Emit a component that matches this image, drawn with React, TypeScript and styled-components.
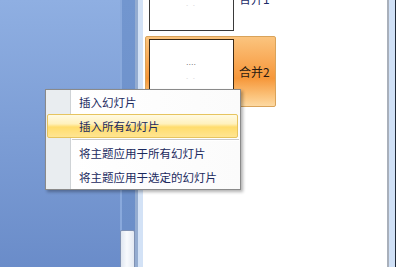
import React from 'react';
import styled, { createGlobalStyle } from 'styled-components';

const GlobalStyle = createGlobalStyle`
    html, body {
        margin: 0;
        padding: 0;
        overflow: hidden;
        background: #ffffff;
    }
    body {
        font-family: "Noto Sans CJK SC", "Noto Sans", sans-serif;
    }
`;

const Screen = styled.div`
    position: relative;
    display: flex;
    width: 399px;
    height: 267px;
    overflow: hidden;
`;

const OutlinePane = styled.div`
    width: 120px;
    background: linear-gradient(#8fafe2, #6a8cc9);
`;

const ScrollTrack = styled.div`
    display: flex;
    flex-direction: column;
    justify-content: flex-end;
    width: 15px;
    box-sizing: border-box;
    border-left: 2px solid #89a9dc;
    background: linear-gradient(#7296cf, #6b8ec8);
`;

const ScrollThumb = styled.div`
    height: 37px;
    margin-left: -2px;
    box-sizing: border-box;
    border: 1px solid #7f91b3;
    border-bottom: none;
    border-radius: 2px 2px 0 0;
    background: linear-gradient(to right, #dfe6f0, #f8fafd 45%, #e3e9f2);
`;

const Strip = styled.div<{ $w: number; $bg: string }>`
    width: ${(p) => p.$w}px;
    background: ${(p) => p.$bg};
`;

const SlidePanel = styled.div`
    flex: 1;
    background: #ffffff;
    padding-left: 2px;
`;

const SlideList = styled.div`
    display: flex;
    flex-direction: column;
    gap: 2px;
    margin-top: -37px;
`;

const SlideItem = styled.div<{ $selected?: boolean }>`
    display: flex;
    align-items: center;
    gap: 5px;
    width: 131px;
    height: 71px;
    box-sizing: border-box;
    padding: 2px 3px;
    border: 1px solid ${(p) => (p.$selected ? '#d9a35a' : 'transparent')};
    border-radius: 2px;
    background: ${(p) =>
        p.$selected
            ? 'linear-gradient(#fbc47e 0%, #f9ad5c 30%, #f6973a 60%, #fbc27a 85%, #fdd9a2 100%)'
            : 'transparent'};
`;

const Thumbnail = styled.div<{ $selected?: boolean }>`
    display: flex;
    flex-direction: column;
    align-items: center;
    flex-shrink: 0;
    width: 85px;
    height: 65px;
    box-sizing: border-box;
    border: 1px solid ${(p) => (p.$selected ? '#3b2a16' : '#3a3a3a')};
    background: #ffffff;
`;

const ThumbTitle = styled.div`
    margin-top: 21px;
    font-size: 5px;
    line-height: 6px;
    color: #6a6a6a;
    letter-spacing: 1px;
`;

const ThumbSubtitle = styled.div`
    margin-top: 8px;
    font-size: 5px;
    line-height: 5px;
    color: #b0b0b0;
    letter-spacing: 2px;
`;

const SlideLabel = styled.span<{ $selected?: boolean }>`
    font-size: 12px;
    color: ${(p) => (p.$selected ? '#2a1a10' : '#1c2b68')};
    white-space: nowrap;
`;

const ContextMenu = styled.div`
    position: absolute;
    left: 45px;
    top: 89px;
    width: 196px;
    box-sizing: border-box;
    border: 1px solid #8a8a8a;
    padding: 0 1px;
    background: linear-gradient(
        to right,
        #e9edf0 0,
        #e9edf0 24px,
        #cfd3d6 24px,
        #cfd3d6 25px,
        #ffffff 25px,
        #fbfbfb 100%
    );
    box-shadow: 2px 2px 3px rgba(0, 0, 0, 0.3);
`;

const MenuItem = styled.div<{ $active?: boolean }>`
    display: flex;
    align-items: center;
    height: 24px;
    box-sizing: border-box;
    padding-left: 31px;
    margin-right: 1px;
    font-size: 11.5px;
    color: #1b2a5e;
    white-space: nowrap;
    border: 1px solid ${(p) => (p.$active ? '#e6c45f' : 'transparent')};
    border-radius: 2px;
    background: ${(p) =>
        p.$active
            ? 'linear-gradient(#fffae3 0%, #fff1bd 40%, #ffdc6c 55%, #ffe592 100%)'
            : 'transparent'};
`;

const MenuSeparator = styled.div`
    height: 3px;
    margin-left: 25px;
    box-sizing: border-box;
    border-top: 1px solid #ffffff;
    border-bottom: 1px solid #ffffff;
    background: #c9c9c9;
`;

const slides = [
    { label: '合并1', selected: false },
    { label: '合并2', selected: true },
];

export default function App() {
    return (
        <>
            <GlobalStyle />
            <Screen>
                <OutlinePane />
                <ScrollTrack>
                    <ScrollThumb />
                </ScrollTrack>
                <Strip $w={3} $bg="#94acd0" />
                <Strip $w={5} $bg="#d3e2f6" />
                <SlidePanel>
                    <SlideList>
                        {slides.map((s) => (
                            <SlideItem key={s.label} $selected={s.selected}>
                                <Thumbnail $selected={s.selected}>
                                    <ThumbTitle>ꞏꞏꞏꞏ</ThumbTitle>
                                    <ThumbSubtitle>- -</ThumbSubtitle>
                                </Thumbnail>
                                <SlideLabel $selected={s.selected}>{s.label}</SlideLabel>
                            </SlideItem>
                        ))}
                    </SlideList>
                </SlidePanel>
                <Strip $w={2} $bg="#a9b0bb" />
                <Strip $w={6} $bg="#cfe0f6" />
                <Strip $w={1} $bg="#1f2a3a" />
                <Strip $w={3} $bg="#ffffff" />

                <ContextMenu>
                    <MenuItem>插入幻灯片</MenuItem>
                    <MenuItem $active>插入所有幻灯片</MenuItem>
                    <MenuSeparator />
                    <MenuItem>将主题应用于所有幻灯片</MenuItem>
                    <MenuItem>将主题应用于选定的幻灯片</MenuItem>
                </ContextMenu>
            </Screen>
        </>
    );
}
